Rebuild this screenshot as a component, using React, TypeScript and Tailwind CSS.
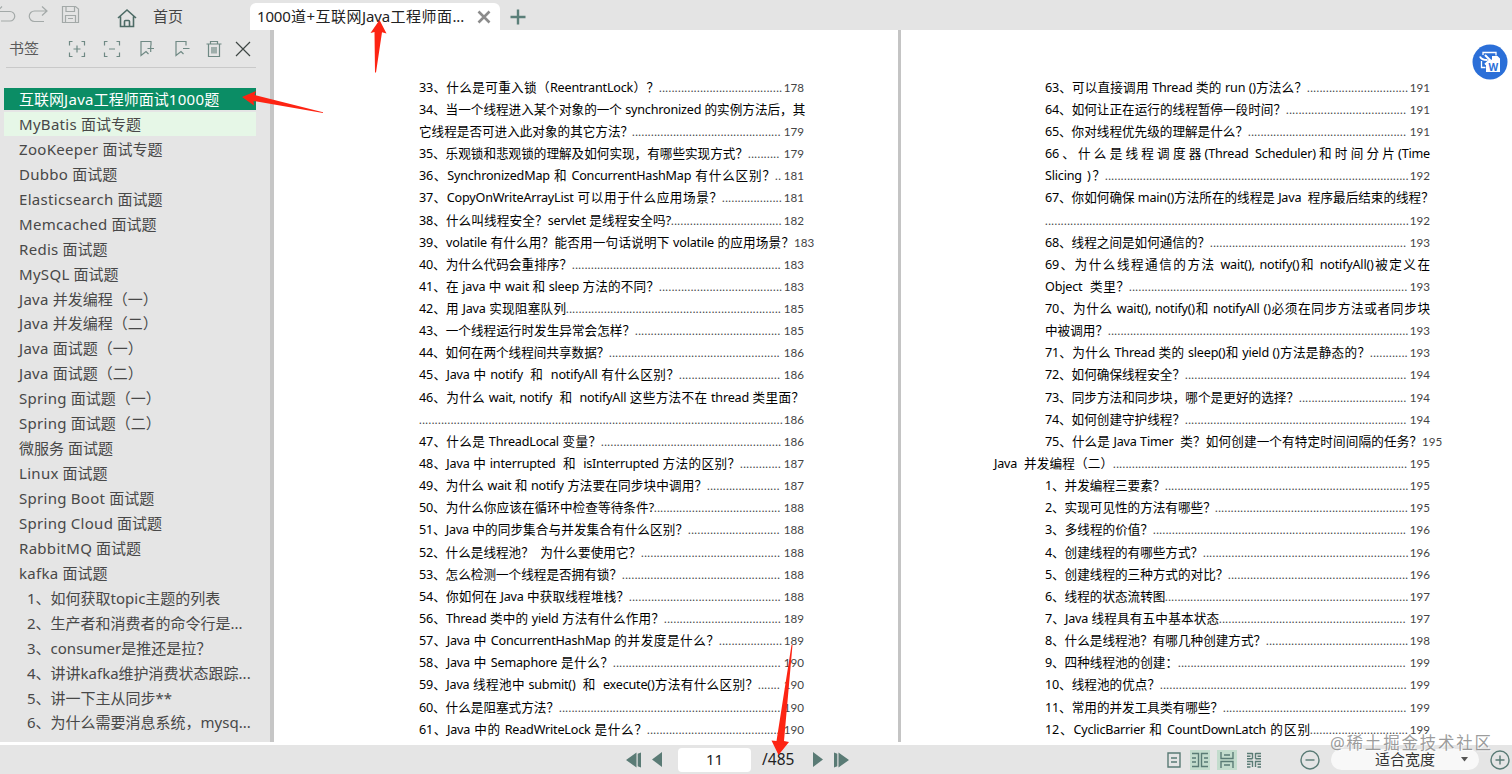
import { ReactNode } from 'react';

interface TocEntry {
  text?: string;
  // width taken by the title before the dots start
  width?: number;
  page?: string;
  chapter?: boolean;
}

const bookmarks = [
  '互联网Java工程师面试1000题',
  'MyBatis 面试专题',
  'ZooKeeper 面试专题',
  'Dubbo 面试题',
  'Elasticsearch 面试题',
  'Memcached 面试题',
  'Redis 面试题',
  'MySQL 面试题',
  'Java 并发编程（一）',
  'Java 并发编程（二）',
  'Java 面试题（一）',
  'Java 面试题（二）',
  'Spring 面试题（一）',
  'Spring 面试题（二）',
  '微服务 面试题',
  'Linux 面试题',
  'Spring Boot 面试题',
  'Spring Cloud 面试题',
  'RabbitMQ 面试题',
  'kafka 面试题',
];

const subBookmarks = [
  '1、如何获取topic主题的列表',
  '2、生产者和消费者的命令行是...',
  '3、consumer是推还是拉？',
  '4、讲讲kafka维护消费状态跟踪...',
  '5、讲一下主从同步**',
  '6、为什么需要消息系统，mysq...',
];

const leftPage: TocEntry[] = [
  { text: '33、什么是可重入锁（ReentrantLock）？', width: 240, page: '178' },
  { text: '34、当一个线程进入某个对象的一个 synchronized 的实例方法后，其', width: 385 },
  { text: '它线程是否可进入此对象的其它方法？', width: 213, page: '179' },
  { text: '35、乐观锁和悲观锁的理解及如何实现，有哪些实现方式？', width: 329, page: '179' },
  { text: '36、SynchronizedMap 和 ConcurrentHashMap 有什么区别？', width: 356, page: '181' },
  { text: '37、CopyOnWriteArrayList 可以用于什么应用场景？', width: 303, page: '181' },
  { text: '38、什么叫线程安全？servlet 是线程安全吗?', width: 252, page: '182' },
  { text: '39、volatile 有什么用？能否用一句话说明下 volatile 的应用场景？', width: 375, page: '183' },
  { text: '40、为什么代码会重排序？', width: 153, page: '183' },
  { text: '41、在 java 中 wait 和 sleep 方法的不同？', width: 240, page: '183' },
  { text: '42、用 Java 实现阻塞队列', width: 147, page: '185' },
  { text: '43、一个线程运行时发生异常会怎样？', width: 216, page: '185' },
  { text: '44、如何在两个线程间共享数据？', width: 190, page: '186' },
  { text: '45、Java 中 notify \u00a0和 \u00a0notifyAll 有什么区别？', width: 260, page: '186' },
  { text: '46、为什么 wait, notify \u00a0和 \u00a0notifyAll 这些方法不在 thread 类里面？', width: 385 },
  { page: '186' },
  { text: '47、什么是 ThreadLocal 变量？', width: 182, page: '186' },
  { text: '48、Java 中 interrupted \u00a0和 \u00a0isInterrupted 方法的区别？', width: 321, page: '187' },
  { text: '49、为什么 wait 和 notify 方法要在同步块中调用？', width: 288, page: '187' },
  { text: '50、为什么你应该在循环中检查等待条件?', width: 235, page: '188' },
  { text: '51、Java 中的同步集合与并发集合有什么区别？', width: 269, page: '188' },
  { text: '52、什么是线程池？ \u00a0为什么要使用它？', width: 222, page: '188' },
  { text: '53、怎么检测一个线程是否拥有锁？', width: 203, page: '188' },
  { text: '54、你如何在 Java 中获取线程堆栈？', width: 210, page: '188' },
  { text: '56、Thread 类中的 yield 方法有什么作用？', width: 245, page: '189' },
  { text: '57、Java 中 ConcurrentHashMap 的并发度是什么？', width: 300, page: '189' },
  { text: '58、Java 中 Semaphore 是什么？', width: 194, page: '190' },
  { text: '59、Java 线程池中 submit() \u00a0和 \u00a0execute()方法有什么区别？', width: 339, page: '190' },
  { text: '60、什么是阻塞式方法？', width: 140, page: '190' },
  { text: '61、Java 中的 ReadWriteLock 是什么？', width: 228, page: '190' },
];

const rightPage: TocEntry[] = [
  { text: '63、可以直接调用 Thread 类的 run ()方法么？', width: 262, page: '191' },
  { text: '64、如何让正在运行的线程暂停一段时间？', width: 241, page: '191' },
  { text: '65、你对线程优先级的理解是什么？', width: 203, page: '191' },
  { text: '66、什么是线程调度器(Thread Scheduler)和时间分片(Time', width: 385 },
  { text: 'Slicing )？', width: 60, page: '192' },
  { text: '67、你如何确保 main()方法所在的线程是 Java \u00a0程序最后结束的线程？', width: 385 },
  { page: '192' },
  { text: '68、线程之间是如何通信的？', width: 165, page: '193' },
  { text: '69、为什么线程通信的方法 wait(), notify()和 notifyAll()被定义在', width: 385 },
  { text: 'Object \u00a0类里？', width: 84, page: '193' },
  { text: '70、为什么 wait(), notify()和 notifyAll ()必须在同步方法或者同步块', width: 385 },
  { text: '中被调用？', width: 63, page: '193' },
  { text: '71、为什么 Thread 类的 sleep()和 yield ()方法是静态的？', width: 325, page: '193' },
  { text: '72、如何确保线程安全？', width: 140, page: '194' },
  { text: '73、同步方法和同步块，哪个是更好的选择？', width: 254, page: '194' },
  { text: '74、如何创建守护线程？', width: 140, page: '194' },
  { text: '75、什么是 Java Timer \u00a0类？如何创建一个有特定时间间隔的任务？', width: 377, page: '195' },
  { text: 'Java \u00a0并发编程（二）', width: 119, page: '195', chapter: true },
  { text: '1、并发编程三要素？', width: 120, page: '195' },
  { text: '2、实现可见性的方法有哪些？', width: 170, page: '195' },
  { text: '3、多线程的价值？', width: 108, page: '196' },
  { text: '4、创建线程的有哪些方式？', width: 158, page: '196' },
  { text: '5、创建线程的三种方式的对比？', width: 183, page: '196' },
  { text: '6、线程的状态流转图', width: 120, page: '197' },
  { text: '7、Java 线程具有五中基本状态', width: 174, page: '197' },
  { text: '8、什么是线程池？有哪几种创建方式？', width: 221, page: '198' },
  { text: '9、四种线程池的创建：', width: 133, page: '199' },
  { text: '10、线程池的优点？', width: 115, page: '199' },
  { text: '11、常用的并发工具类有哪些？', width: 178, page: '199' },
  { text: '12、CyclicBarrier 和 CountDownLatch 的区别', width: 265, page: '199' },
];

const LINE_WIDTH = 385;
const CHAPTER_OUTDENT = 51;
const DOT_STEP = 3.16;

function getLeader(entry: TocEntry) {
  const lineWidth = LINE_WIDTH + (entry.chapter ? CHAPTER_OUTDENT : 0);
  const free = lineWidth - (entry.width ?? 0) - 21.5;
  return '.'.repeat(Math.max(0, Math.floor(free / DOT_STEP)));
}

// Latin runs get their own tracking next to the Chinese text around them
function MixedText({ text, latin = 'tracking-[-0.2px]' }: { text: string; latin?: string }) {
  return (
    <>
      {text.split(/([\x21-\x7e]+)/).map((part, index) =>
        index % 2 === 1 ? (
          <span key={index} className={latin}>{part}</span>
        ) : (
          part
        )
      )}
    </>
  );
}

function TocPage({ entries }: { entries: TocEntry[] }) {
  return (
    <div className="w-[385px] pt-[46.6px] text-[12.6px] text-black">
      {entries.map((entry, index) => {
        const leader = getLeader(entry);

        return (
          <div key={index} className={`flex h-[22.15px] items-center leading-[22px] whitespace-nowrap ${entry.chapter ? '-ml-[51px]' : ''}`}>
            {entry.text && (
              <div className="shrink-0 [text-align-last:justify]" style={{ width: entry.width }}>
                <MixedText text={entry.text} />
              </div>
            )}
            {entry.page && (
              <>
                <div className="min-w-0 flex-1 font-[Lato] text-[11.3px] tracking-[0.5px] text-[#444]">{leader}</div>
                <div className="shrink-0 font-[Lato] text-[11.6px] text-[#444]">{entry.page}</div>
              </>
            )}
          </div>
        );
      })}
    </div>
  );
}

function Icon({ size = 18, className = '', children }: { size?: number; className?: string; children: ReactNode }) {
  return (
    <svg width={size} height={size} viewBox={`0 0 ${size} ${size}`} fill="none" stroke="currentColor" strokeWidth="1.2" className={`shrink-0 ${className}`}>
      {children}
    </svg>
  );
}

function TopBar() {
  return (
    <div className="flex h-[30px] shrink-0 bg-[#e4e4e4]">
      <div className="flex w-[250px] shrink-0 items-start text-[#a3a9a8]">
        <Icon className="mt-[6px]">
          <path d="M-3 5.500H10a4.600 4.600 0 0 1 0 9.500H1M2 .5L-3 5.500" />
        </Icon>
        <Icon size={21} className="ml-[9px] mt-[5px]">
          <path d="M20 6H7.500a5 5 0 0 0 0 10.500H17M15 1.500L20 6l-5 4.500" />
        </Icon>
        <Icon size={19} className="ml-[13px] mt-[5px]">
          <path d="M1.500 1.500H14.500L17.500 4v13.500h-16zM5 1.500v5h8.500v-5M4.500 17.500v-7h10v7M7 13.500h5" />
        </Icon>
        <Icon size={20} className="ml-[37px] mt-[8px] text-[#4d6b66] [stroke-width:1.6]">
          <path d="M1 10L10 2l9 8M3.500 8.500V18.500H16.500V8.500M7.500 18.500V13.500q0-1 1-1h3q1 0 1 1v5" />
        </Icon>
        <span className="ml-[16px] mt-[5px] text-[15px] leading-[22px] text-[#444]">首页</span>
      </div>
      <div className="mt-[3px] flex w-[250px] shrink-0 items-center rounded-t-md bg-white pl-[7px] text-[15px] text-[#222]">
        <span className="w-[207px] whitespace-nowrap [text-align-last:justify]">
          <MixedText text="1000道+互联网Java工程师面..." />
        </span>
        <svg width="14" height="14" viewBox="0 0 14 14" stroke="#8b8b8b" strokeWidth="2.6" className="ml-[13px]">
          <path d="M1.500 1.500l11 11M12.500 1.500l-11 11" />
        </svg>
      </div>
      <svg width="16" height="16" viewBox="0 0 16 16" stroke="#5b7f79" strokeWidth="2.4" className="ml-[10px] mt-[9px]">
        <path d="M8 .5v15M.5 8h15" />
      </svg>
    </div>
  );
}

function Sidebar() {
  return (
    <div className="flex w-[274px] shrink-0 border-r-4 border-[#c6c6c6] bg-[#e5e5e5]">
      <div className="w-[256px] pl-1">
        <div className="ml-0.5 flex h-[38px] items-center border-b border-[#c9c9c9] text-[#6f8984]">
          <span className="ml-[3px] w-[59px] text-[15px] text-[#5a5a5a]">书签</span>
          <Icon>
            <path d="M1.500 5.500v-4h3M13.500 1.500h3v4M16.500 12.500v4h-3M4.500 16.500h-3v-4M5.500 9h7M9 5.500v7" />
          </Icon>
          <Icon className="ml-[17px]">
            <path d="M1.500 5.500v-4h3M13.500 1.500h3v4M16.500 12.500v4h-3M4.500 16.500h-3v-4M6 9h6" />
          </Icon>
          <Icon className="ml-[17px]">
            <path d="M13 5.500V1.500H3v14l5-4 2.500 2.500M9.500 8.500h6.500M12.700 5.500v6.500" />
          </Icon>
          <Icon className="ml-[17px]">
            <path d="M13 5.500V1.500H3v14l5-4 2.500 2.500M10 8.500h6.500" />
          </Icon>
          <Icon className="ml-[14px]">
            <path d="M1.500 4h15M5.500 4V1.500h7V4M3.500 4v12.500h11V4M7 7v6.500M9 7v6.500M11 7v6.500" />
          </Icon>
          <Icon className="ml-[11px] text-[#3f4745]">
            <path d="M2 2l14 14M16 2L2 16" />
          </Icon>
        </div>
        <div className="mt-[19px] text-[15px] text-[#484848]">
          {bookmarks.map((name, index) => (
            <div key={name} className="flex h-[24.94px] items-start whitespace-nowrap">
              <div
                className={`w-full pl-[15px] ${
                  index === 0 ? 'mt-px h-[22px] bg-[#0b8d65] leading-[22px] text-white' : index === 1 ? 'h-[24px] bg-[#e6f7e7] leading-[24px]' : 'h-[24px] leading-[24px]'
                }`}
              >
                <MixedText text={name} latin="tracking-[0.3px]" />
              </div>
            </div>
          ))}
          {subBookmarks.map((name) => (
            <div key={name} className="flex h-[24.94px] items-start pl-[23px] whitespace-nowrap">
              <div className="h-[24px] leading-[24px]">{name}</div>
            </div>
          ))}
        </div>
      </div>
    </div>
  );
}

function BottomBar() {
  return (
    <div className="mt-[3px] flex h-[29px] shrink-0 items-center bg-[#e5e5e5] text-[#5a7b75]">
      <svg width="15" height="16" viewBox="0 0 15 16" fill="currentColor" className="ml-[626px]">
        <path d="M10.500 .5v15L0 8zM11.700 1.800L15 .5v15l-3.300-1.300z" />
      </svg>
      <svg width="10" height="15" viewBox="0 0 10 15" fill="currentColor" className="ml-[11px]">
        <path d="M10 0v15L0 7.500z" />
      </svg>
      <div className="ml-[16px] flex h-[24px] w-[73px] items-center justify-center rounded-sm bg-white text-[15px] text-[#222]">11</div>
      <span className="ml-[11px] w-[36px] text-[15.500px] text-[#222]">/485</span>
      <svg width="10" height="15" viewBox="0 0 10 15" fill="currentColor" className="ml-[15px]">
        <path d="M0 0v15l10-7.500z" />
      </svg>
      <svg width="15" height="16" viewBox="0 0 15 16" fill="currentColor" className="ml-[11px]">
        <path d="M4.500 .5v15L15 8zM0 .5l3.300 1.300v12.400L0 15.500z" />
      </svg>
      <Icon size={16} className="ml-[317px] [stroke-width:1.4]">
        <path d="M2 1h12v14H2zM5 6h6M5 10h6" />
      </Icon>
      <div className="ml-[8px] flex h-5 w-5 items-center justify-center bg-[#c3dccd]">
        <Icon size={16} className="[stroke-width:1.4]">
          <path d="M0 1.500h6.500v13H0M0 6h4M0 10h4M16 1.500H9.500v13H16M12 6h4M12 10h4" />
        </Icon>
      </div>
      <div className="ml-[7px] flex h-5 w-5 items-center justify-center bg-[#c3dccd]">
        <Icon size={16} className="[stroke-width:1.4]">
          <path d="M2 0v6.500h12V0M2 16V9.500h12V16M5 3h6M5 13h6" />
        </Icon>
      </div>
      <Icon size={16} className="ml-[9px] [stroke-width:1.4]">
        <path d="M1 1.500h5.500M6.500 1v5.800M1 6.800h5.500M1 4.200h3.500M15 1.500H9.500M9.500 1v5.800M15 6.800H9.500M11.500 4.200H15M1 9.500h5.500V15M1 12.200h3.500M1 15h3.500M15 9.500H9.500V15M11.500 12.200H15M11.500 15H15" />
      </Icon>
      <Icon size={20} className="ml-[38px] [stroke-width:1.4]">
        <circle cx="10" cy="10" r="9" />
        <path d="M5.500 10h9" />
      </Icon>
      <div className="relative ml-[11px] flex h-[21px] w-[148px] items-center justify-center rounded-full bg-[#f8f8f8] text-[15px] text-[#333]">
        适合宽度
        <svg width="7" height="5" viewBox="0 0 7 5" fill="#555" className="absolute right-[11px] top-[8px]">
          <path d="M0 0h7L3.500 4.500z" />
        </svg>
      </div>
      <Icon size={20} className="ml-[11px] [stroke-width:1.4]">
        <circle cx="10" cy="10" r="9" />
        <path d="M5.500 10h9M10 5.500v9" />
      </Icon>
    </div>
  );
}

export default function App() {
  return (
    <div className="relative flex h-[774px] w-[1512px] flex-col overflow-hidden bg-white font-['Noto_Sans','Noto_Sans_CJK_SC',sans-serif]">
      <TopBar />
      <div className="flex h-[712px] shrink-0 overflow-hidden">
        <Sidebar />
        <div className="w-[624px] shrink-0 pl-[145px]">
          <TocPage entries={leftPage} />
        </div>
        <div className="w-[3px] shrink-0 bg-[#c4c4c4]" />
        <div className="flex-1 pl-[144px]">
          <TocPage entries={rightPage} />
        </div>
      </div>
      <BottomBar />

      {/* convert to Word */}
      <svg width="36" height="36" viewBox="0 0 36 36" fill="none" className="absolute left-[1472px] top-[44px]">
        <circle cx="18" cy="18" r="17.500" fill="#2b6fd8" />
        <path d="M11 11V8.500h13v3M9.500 17v6.500h4" stroke="#fff" strokeWidth="1.300" />
        <path d="M20 12h5.500l2.500 2.500V28H14V18.500l6-3z" fill="#fff" />
        <path d="M8 12.500c1 3 4 3.500 7.500 3.500M13 11l5 5-5 4.500" stroke="#fff" strokeWidth="2" />
        <text x="21.300" y="26.500" textAnchor="middle" fontSize="10" fontWeight="700" fontFamily="Open Sans" fill="#2b6fd8">W</text>
      </svg>

      {/* watermark */}
      <div className="absolute left-[1330px] top-[731px] w-[161px] text-[16.500px] leading-[23px] whitespace-nowrap text-[#8a8a8a]/85 [text-align-last:justify] [text-shadow:1px_1px_0_#ffffffaa]">
        @稀土掘金技术社区
      </div>

      {/* red pointers */}
      <svg width="1512" height="774" viewBox="0 0 1512 774" fill="#fd2413" className="pointer-events-none absolute inset-0">
        <path d="M379.500 20l7 13.500-4.500-1.200L376 72.500h-1L374.500 32l-4 1z" />
        <path d="M242 97l14-6-1.500 4 68.500 17.300v.7L253.500 101l.5 4.500z" />
        <path d="M791.500 645h1L784 741l5 1-10.500 13-7-14.500 5 .5z" />
      </svg>
    </div>
  );
}
